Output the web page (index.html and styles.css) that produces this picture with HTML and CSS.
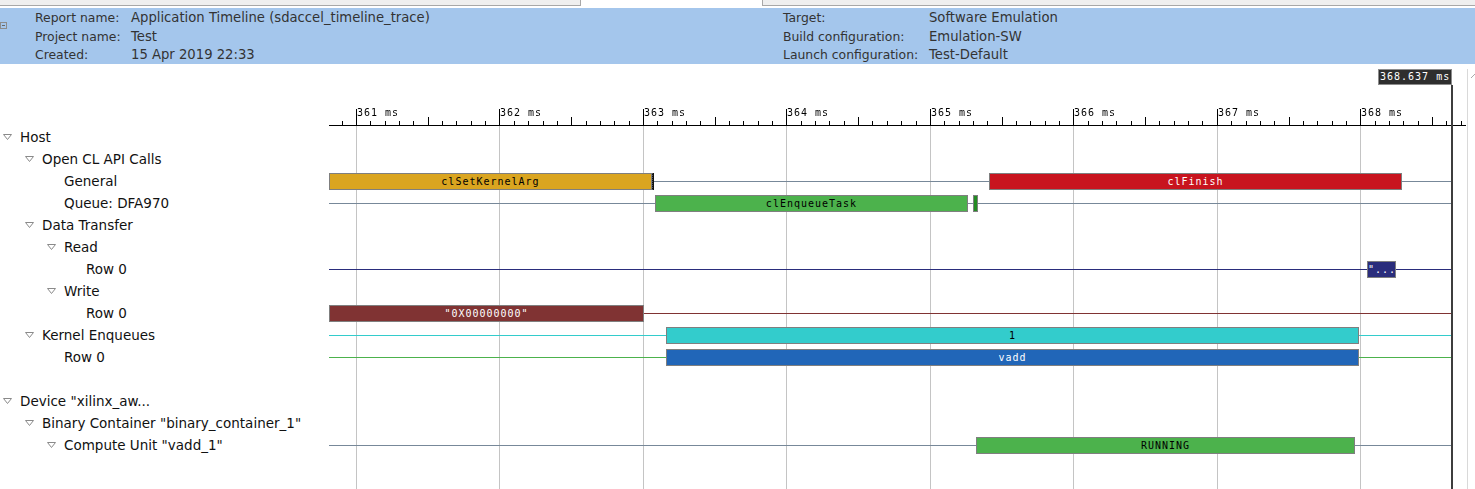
FILE: index.html
```html
<!DOCTYPE html>
<html>
<head>
  <title>Application Timeline</title>
  <link rel="stylesheet" href="styles.css">
</head>
<body>
  <div class="tabbar">
    <div class="tab-strip first"></div>
    <div class="tab-active"></div>
    <div class="tab-strip"></div>
  </div>

  <div class="summary">
    <div class="toggle"></div>
    <div class="info info-left">
      <span class="key">Report name:</span><span>Application Timeline (sdaccel_timeline_trace)</span>
      <span class="key">Project name:</span><span>Test</span>
      <span class="key">Created:</span><span>15 Apr 2019 22:33</span>
    </div>
    <div class="info info-right">
      <span class="key">Target:</span><span>Software Emulation</span>
      <span class="key">Build configuration:</span><span>Emulation-SW</span>
      <span class="key">Launch configuration:</span><span>Test-Default</span>
    </div>
  </div>

  <div class="timeline">
    <div class="main">
      <div class="grid" id="grid"></div>

      <div class="ruler-row">
        <div class="ruler-spacer"></div>
        <div class="ruler" id="ruler">
          <svg class="ticks" id="ticks" width="1138" height="62"></svg>
        </div>
      </div>

      <div class="row">
        <div class="label in-0"><svg class="twist" width="9" height="6"><polygon points="0.5,0.5 8.5,0.5 4.5,5.5"/></svg>Host</div>
      </div>
      <div class="row">
        <div class="label in-1"><svg class="twist" width="9" height="6"><polygon points="0.5,0.5 8.5,0.5 4.5,5.5"/></svg>Open CL API Calls</div>
      </div>
      <div class="row">
        <div class="label in-2"><i class="leaf"></i>General</div>
        <div class="lane slate">
          <div class="bar gold" style="left: 0px; width: 323px;">clSetKernelArg</div>
          <div class="bar mark" style="left: 323px; width: 2px;"></div>
          <div class="bar red" style="left: 660px; width: 413px;">clFinish</div>
        </div>
      </div>
      <div class="row">
        <div class="label in-2"><i class="leaf"></i>Queue: DFA970</div>
        <div class="lane slate">
          <div class="bar green" style="left: 326px; width: 313px;">clEnqueueTask</div>
          <div class="bar dkgreen" style="left: 644px; width: 5px;"></div>
        </div>
      </div>
      <div class="row">
        <div class="label in-1"><svg class="twist" width="9" height="6"><polygon points="0.5,0.5 8.5,0.5 4.5,5.5"/></svg>Data Transfer</div>
      </div>
      <div class="row">
        <div class="label in-2"><svg class="twist" width="9" height="6"><polygon points="0.5,0.5 8.5,0.5 4.5,5.5"/></svg>Read</div>
      </div>
      <div class="row">
        <div class="label in-3"><i class="leaf"></i>Row 0</div>
        <div class="lane navy-line">
          <div class="bar navy" style="left: 1038px; width: 29px;">"...</div>
        </div>
      </div>
      <div class="row">
        <div class="label in-2"><svg class="twist" width="9" height="6"><polygon points="0.5,0.5 8.5,0.5 4.5,5.5"/></svg>Write</div>
      </div>
      <div class="row">
        <div class="label in-3"><i class="leaf"></i>Row 0</div>
        <div class="lane maroon-line">
          <div class="bar maroon" style="left: 0px; width: 315px;">"0X00000000"</div>
        </div>
      </div>
      <div class="row">
        <div class="label in-1"><svg class="twist" width="9" height="6"><polygon points="0.5,0.5 8.5,0.5 4.5,5.5"/></svg>Kernel Enqueues</div>
        <div class="lane cyan-line">
          <div class="bar cyan" style="left: 337px; width: 693px;">1</div>
        </div>
      </div>
      <div class="row">
        <div class="label in-2"><i class="leaf"></i>Row 0</div>
        <div class="lane green-line">
          <div class="bar blue" style="left: 337px; width: 693px;">vadd</div>
        </div>
      </div>
      <div class="row"></div>
      <div class="row">
        <div class="label in-0"><svg class="twist" width="9" height="6"><polygon points="0.5,0.5 8.5,0.5 4.5,5.5"/></svg>Device "xilinx_aw...</div>
      </div>
      <div class="row">
        <div class="label in-1"><svg class="twist" width="9" height="6"><polygon points="0.5,0.5 8.5,0.5 4.5,5.5"/></svg>Binary Container "binary_container_1"</div>
      </div>
      <div class="row">
        <div class="label in-2"><svg class="twist" width="9" height="6"><polygon points="0.5,0.5 8.5,0.5 4.5,5.5"/></svg>Compute Unit "vadd_1"</div>
        <div class="lane slate">
          <div class="bar green" style="left: 647px; width: 379px;">RUNNING</div>
        </div>
      </div>

      <div class="cursor-label">368.637 ms</div>
      <div class="cursor-line"></div>
    </div>
    <div class="vscroll">
      <svg class="grip" width="4" height="4"><line x1="0" y1="4" x2="4" y2="0"/></svg>
    </div>
  </div>

  <script>
    var PX_PER_MS = 143.47;
    var ORIGIN = 27; // where 361 ms sits inside the ruler
    var RULER_LEFT = 329;

    function timeToX(t) {
      return Math.round(ORIGIN + (t - 361) * PX_PER_MS);
    }

    function drawRuler() {
      var ruler = document.getElementById("ruler");
      var ticks = document.getElementById("ticks");
      var grid = document.getElementById("grid");
      var markup = '<rect x="0" y="61" width="1137" height="1"/>';
      var labels = "";
      var lines = "";
      for (var i = 3609; i <= 3687; i++) {
        var x = timeToX(i / 10);
        if (i % 10 === 0) {
          markup += '<rect x="' + x + '" y="45" width="1" height="16"/>';
          labels += '<span class="tick-label" style="left: ' + (x + 1) + 'px;">' + (i / 10) + ' ms</span>';
          lines += '<div class="grid-line" style="left: ' + (RULER_LEFT + x) + 'px;"></div>';
        } else if (i % 5 === 0) {
          markup += '<rect x="' + x + '" y="53" width="1" height="8"/>';
        } else {
          markup += '<rect x="' + x + '" y="57" width="1" height="4"/>';
        }
      }
      ticks.innerHTML = markup;
      ruler.insertAdjacentHTML("beforeend", labels);
      grid.innerHTML = lines;
    }

    drawRuler();
  </script>
</body>
</html>
```

FILE: styles.css
```css
body {
  margin: 0;
  width: 1475px;
  height: 489px;
  overflow: hidden;
  background-color: #fff;
  font-family: "DejaVu Sans", sans-serif;
}

.tabbar {
  display: flex;
  height: 8px;
}

.tab-strip {
  flex: 1;
  height: 5px;
  background-color: #efefef;
  border-bottom: 1px solid #a8a8a8;
}

.tab-strip.first {
  flex: none;
  width: 580px;
}

.tab-active {
  width: 181px;
  height: 6px;
  border-left: 1px solid #a8a8a8;
  border-right: 1px solid #a8a8a8;
}

.summary {
  display: flex;
  height: 56px;
  background-color: #a4c6ec;
  color: #333;
  font-size: 13.2px;
  line-height: 18.7px;
}

.summary .key {
  font-size: 12.4px;
}

.toggle {
  position: relative;
  flex: none;
  width: 5px;
  height: 5px;
  margin-top: 14px;
  border: 1px solid #8c8c8c;
}

.toggle::after {
  content: "";
  position: absolute;
  left: 1px;
  top: 2px;
  width: 3px;
  height: 1px;
  background-color: #666;
}

.info {
  display: grid;
  align-content: start;
  padding-top: 1px;
  white-space: nowrap;
}

.info-left {
  width: 748px;
  margin-left: 28px;
  grid-template-columns: 96px auto;
}

.info-right {
  grid-template-columns: 146px auto;
}

.timeline {
  display: flex;
  height: 425px;
}

.main {
  position: relative;
  width: 1467px;
  flex: none;
}

.grid {
  position: absolute;
  left: 0;
  right: 0;
  top: 62px;
  bottom: 0;
}

.grid-line {
  position: absolute;
  top: 0;
  bottom: 0;
  width: 1px;
  background-color: #c4c4c4;
}

.ruler-row {
  display: flex;
  height: 62px;
}

.ruler-spacer {
  width: 329px;
  flex: none;
}

.ruler {
  position: relative;
  flex: 1;
}

.ticks {
  display: block;
}

.ticks rect {
  fill: #000;
}

.tick-label {
  position: absolute;
  top: 44px;
  background-color: #fff;
  font-family: "DejaVu Sans Mono", monospace;
  font-size: 10px;
  letter-spacing: 1px;
  line-height: 9px;
  color: #000;
  white-space: nowrap;
  will-change: transform;
}

.row {
  display: flex;
  height: 22px;
}

.label {
  width: 329px;
  flex: none;
  box-sizing: border-box;
  display: flex;
  align-items: center;
  font-size: 13.5px;
  color: #111;
  white-space: nowrap;
}

.in-0 { padding-left: 3px; }
.in-1 { padding-left: 25px; }
.in-2 { padding-left: 47px; }
.in-3 { padding-left: 69px; }

.twist {
  flex: none;
  margin-right: 8px;
}

.twist polygon {
  fill: #fff;
  stroke: #8a8a8a;
}

.leaf {
  width: 17px;
  flex: none;
}

.lane {
  position: relative;
  width: 1123px;
  flex: none;
}

.lane::before {
  content: "";
  position: absolute;
  left: 0;
  right: 0;
  top: 11px;
  height: 1px;
  background-color: #778899;
}

.lane.navy-line::before { background-color: #2a2d7c; }
.lane.maroon-line::before { background-color: #803333; }
.lane.cyan-line::before { background-color: #33cccc; }
.lane.green-line::before { background-color: #4cb24c; }

.bar {
  position: absolute;
  top: 3px;
  height: 17px;
  box-sizing: border-box;
  border: 1px solid #7f7f7f;
  font-family: "DejaVu Sans Mono", monospace;
  font-size: 10px;
  letter-spacing: 1px;
  line-height: 15px;
  text-align: center;
  white-space: nowrap;
  overflow: hidden;
  color: #000;
}

.bar.gold { background-color: #daa520; }
.bar.red { background-color: #c8141e; color: #fff; }
.bar.green { background-color: #4cb24c; }
.bar.dkgreen { background-color: #228b22; }
.bar.navy { background-color: #2a2d7c; color: #fff; }
.bar.maroon { background-color: #803333; color: #fff; }
.bar.cyan { background-color: #33cccc; }
.bar.blue { background-color: #2166b8; color: #fff; }

.bar.mark {
  border: none;
  border-left: 1px dotted #555;
  background-color: #111;
}

.cursor-label {
  position: absolute;
  left: 1378px;
  top: 5px;
  width: 74px;
  height: 16px;
  box-sizing: border-box;
  padding-left: 1px;
  background-color: #2e2e2e;
  border: 1px solid #8c8c8c;
  color: #fff;
  font-family: "DejaVu Sans Mono", monospace;
  font-size: 10px;
  letter-spacing: 1px;
  line-height: 14px;
  white-space: nowrap;
}

.cursor-line {
  position: absolute;
  left: 1451px;
  top: 21px;
  bottom: 0;
  width: 2px;
  background-color: #3d3d3d;
}

.vscroll {
  flex: 1;
  margin-top: 5px;
  border-left: 1px solid #d9d9d9;
}

.grip {
  display: block;
  margin: 5px 0 0 3px;
}

.grip line {
  stroke: #aaa;
}
```
